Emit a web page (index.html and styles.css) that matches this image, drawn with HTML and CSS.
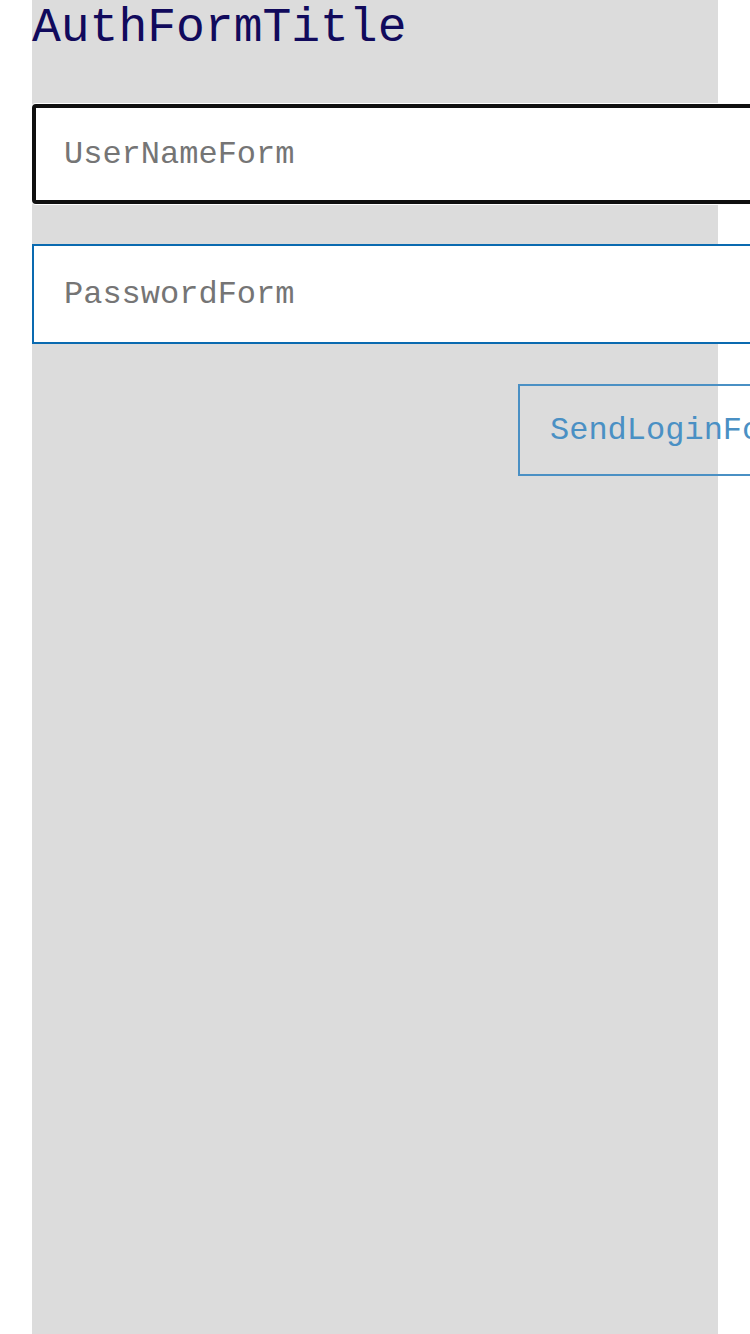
FILE: index.html
```html
<!DOCTYPE html>
<html>
<head>
<meta charset="utf-8">
<link rel="stylesheet" href="styles.css">
</head>
<body>
<main class="panel">
  <h1 class="title">AuthFormTitle</h1>
  <form class="form">
    <input class="field field-focused" type="text" placeholder="UserNameForm">
    <input class="field" type="password" placeholder="PasswordForm">
    <div class="actions">
      <button class="send" type="button">SendLoginForm</button>
    </div>
  </form>
</main>
</body>
</html>
```

FILE: styles.css
```css
html, body {
  margin: 0;
  padding: 0;
  background: #ffffff;
  overflow: hidden;
}
body {
  padding: 0 32px;
  font-family: "Liberation Mono", "Courier New", monospace;
}
.panel {
  background: #dcdcdc;
  min-height: 1334px;
  width: 686px;
}
.title {
  margin: 0;
  padding-top: 1px;
  font-family: "Liberation Mono", monospace;
  font-weight: normal;
  font-size: 48px;
  line-height: 54px;
  color: #110a5c;
}
.form {
  display: flex;
  flex-direction: column;
  margin-top: 49px;
  gap: 40px;
}
.field {
  box-sizing: border-box;
  width: 782px;
  height: 100px;
  margin: 0;
  padding: 0 30px;
  border: 2px solid #0a6ab0;
  background: #ffffff;
  font-family: "Liberation Mono", monospace;
  font-size: 32px;
  color: #333;
  outline: none;
}
.field::placeholder {
  color: #757575;
}
.field-focused {
  border: 4px solid #101010;
  border-radius: 4px;
  padding: 0 28px;
  box-shadow: 0 0 0 1px #ffffff;
}
.actions {
  display: flex;
  padding-left: 486px;
}
.send {
  flex: none;
  box-sizing: border-box;
  height: 92px;
  margin: 0;
  padding: 0 30px;
  border: 2px solid #4a90c4;
  background: transparent;
  color: #4a90c4;
  font-family: "Liberation Mono", monospace;
  font-size: 32px;
  white-space: nowrap;
  border-radius: 0;
}
```
